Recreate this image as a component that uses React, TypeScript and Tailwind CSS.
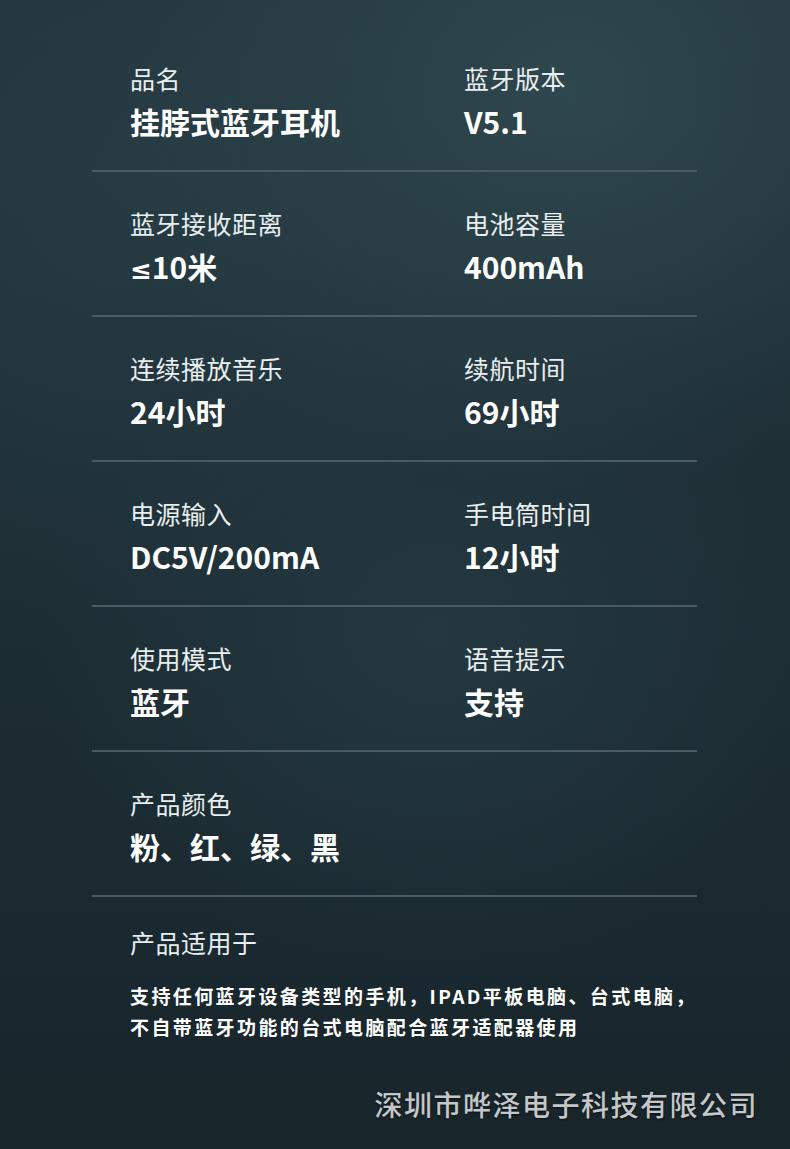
import React from "react";

const font = { fontFamily: '"Noto Sans CJK SC", "Noto Sans", sans-serif' };

type Cell = { label: string; value: React.ReactNode };
const rows: [Cell, Cell | null][] = [
  [{ label: "品名", value: "挂脖式蓝牙耳机" }, { label: "蓝牙版本", value: "V5.1" }],
  [
    {
      label: "蓝牙接收距离",
      value: (
        <>
          <span style={{ fontFamily: '"DejaVu Sans", sans-serif' }} className="text-[26px]">≤</span>10米
        </>
      ),
    },
    { label: "电池容量", value: "400mAh" },
  ],
  [{ label: "连续播放音乐", value: "24小时" }, { label: "续航时间", value: "69小时" }],
  [{ label: "电源输入", value: "DC5V/200mA" }, { label: "手电筒时间", value: "12小时" }],
  [{ label: "使用模式", value: "蓝牙" }, { label: "语音提示", value: "支持" }],
  [{ label: "产品颜色", value: "粉、红、绿、黑" }, null],
];

function CellView({ c }: { c: Cell }) {
  return (
    <div className="flex flex-col">
      <div className="h-[32px] leading-[32px] text-[25px] text-[#e9eef0] tracking-[0.5px]">{c.label}</div>
      <div className="mt-[7px] h-[40px] leading-[40px] text-[30px] font-bold text-white">{c.value}</div>
    </div>
  );
}

export default function App() {
  return (
    <div
      style={font}
      className="w-[790px] h-[1149px] overflow-hidden bg-[radial-gradient(ellipse_60%_35%_at_72%_8%,#2f474e_0%,transparent_100%),radial-gradient(ellipse_55%_40%_at_15%_15%,#263b43_0%,transparent_100%),radial-gradient(ellipse_50%_30%_at_55%_55%,#243840_0%,transparent_100%),linear-gradient(180deg,#22343b_0%,#1e2e35_45%,#1b2a31_75%,#18252b_100%)]"
    >
      <div className="pt-[27px] mx-[92px] w-[605px]">
        {rows.map((r, i) => (
          <div key={i} className="h-[145px] border-b-2 border-[#4a5c62] pl-[38px] pt-[35px] grid grid-cols-[334px_1fr]">
            <CellView c={r[0]} />
            {r[1] ? <CellView c={r[1]} /> : <div />}
          </div>
        ))}
        <div className="pl-[38px] pt-[29px]">
          <div className="h-[32px] leading-[32px] text-[25px] text-[#e9eef0] tracking-[0.5px]">产品适用于</div>
          <div className="mt-[22px] text-[19px] leading-[31px] font-bold text-white tracking-[2.4px] whitespace-nowrap">
            <div>支持任何蓝牙设备类型的手机，IPAD平板电脑、台式电脑，</div>
            <div>不自带蓝牙功能的台式电脑配合蓝牙适配器使用</div>
          </div>
        </div>
      </div>
      <div className="mt-[44px] pr-[32px] flex justify-end">
        <div className="text-[28px] leading-[36px] font-medium text-[#c3c7c9] tracking-[1.5px] [text-shadow:0_1px_2px_rgba(0,0,0,0.6)]">
          深圳市哗泽电子科技有限公司
        </div>
      </div>
    </div>
  );
}
